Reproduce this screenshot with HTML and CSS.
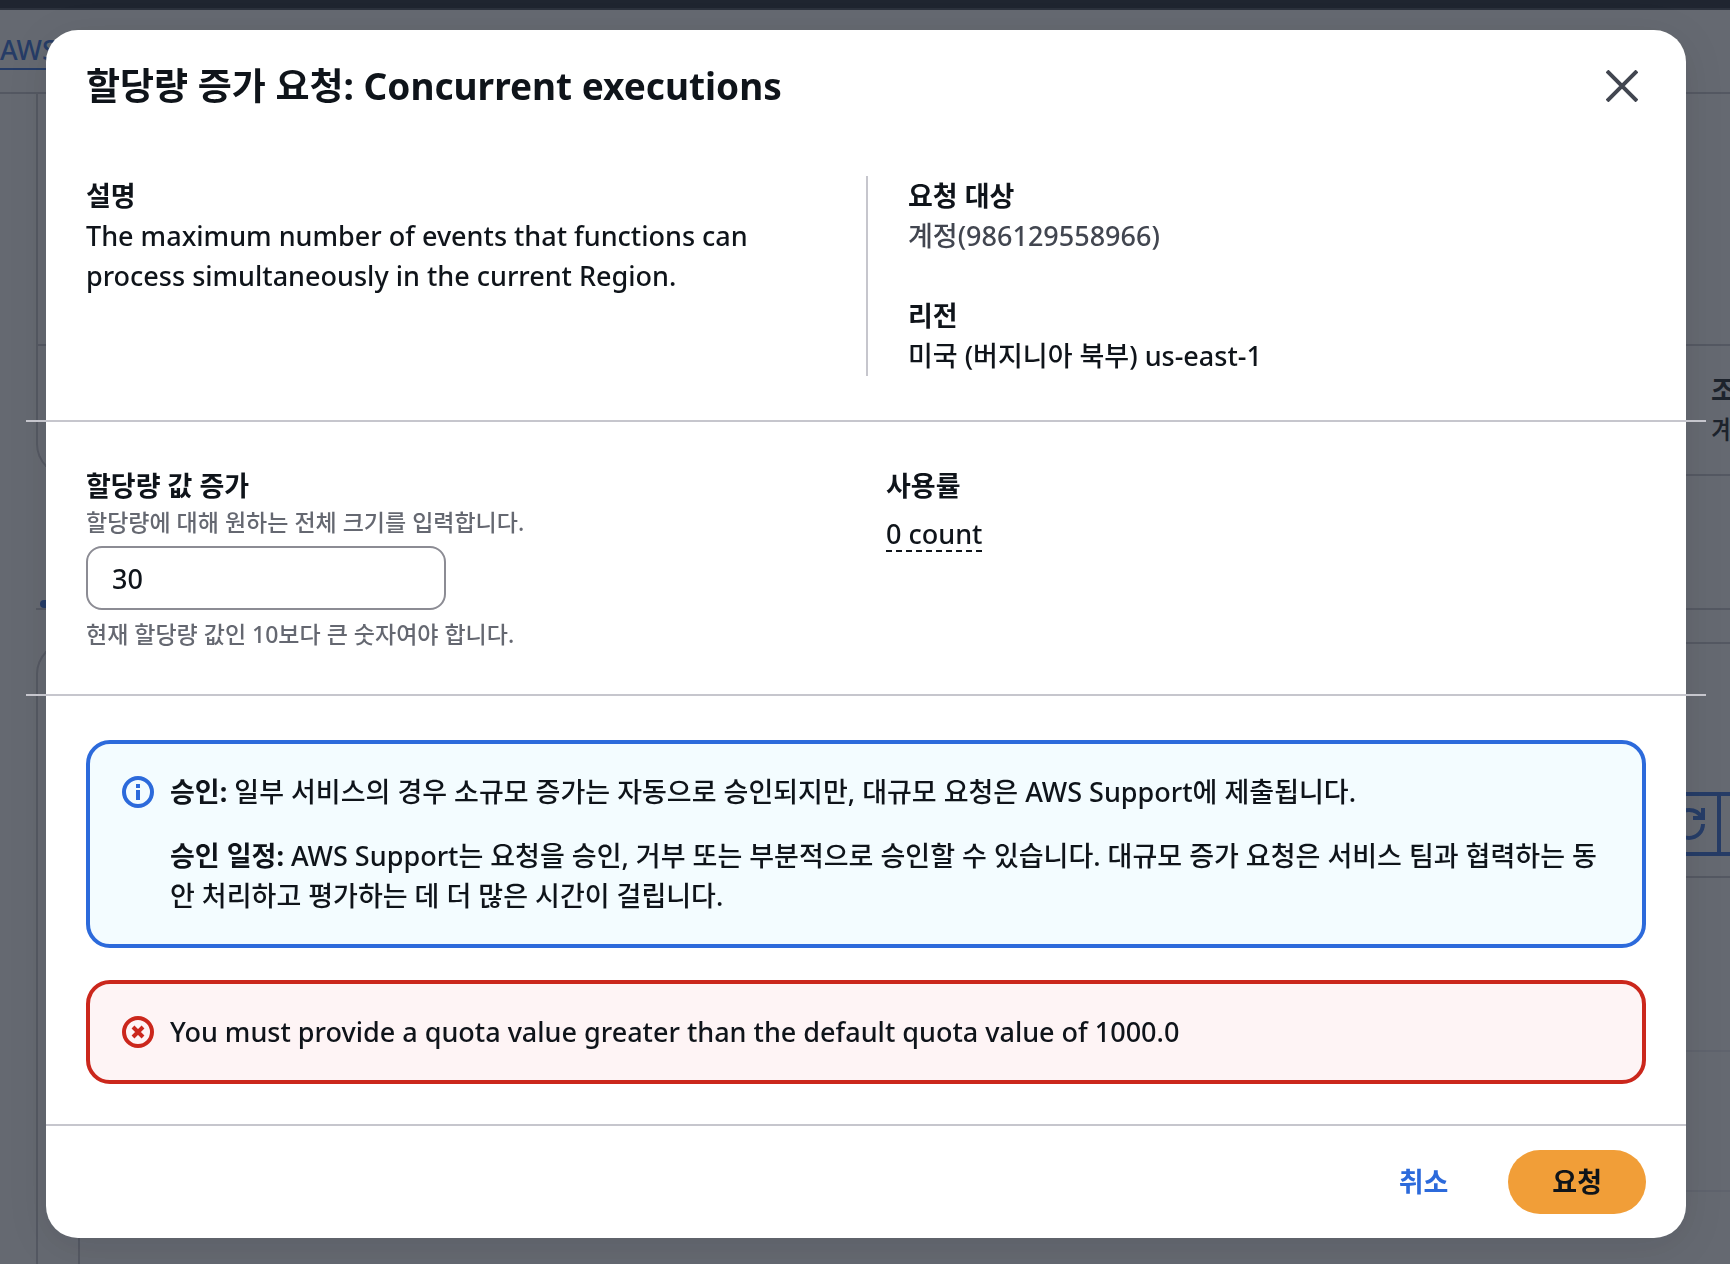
FILE: index.html
```html
<!DOCTYPE html>
<html lang="ko">
<head>
    <meta charset="UTF-8">
    <meta name="viewport" content="width=device-width, initial-scale=1">
    <title>할당량 증가 요청</title>
    <link rel="stylesheet" href="styles.css">
</head>
<body>

<!-- page behind the dialog -->
<div class="page" inert>
    <div class="topbar"></div>
    <div class="breadcrumb"><a href="#">AWS</a></div>
    <div class="content">
        <div class="panel panel-summary">
            <div class="panel-head"></div>
            <div class="panel-row">
                <div class="cell"><b>조</b><br>계</div>
            </div>
        </div>
        <div class="tabs"><span class="tab-mark"></span></div>
        <div class="panel panel-table">
            <div class="tools">
                <button class="tool" type="button" aria-label="새로 고침">
                    <svg width="32" height="32" viewBox="0 0 16 16" fill="none" stroke="currentColor" stroke-width="2">
                        <path d="M15 0v5h-5"/>
                        <path d="M15 8c0 3.900-3.100 7-7 7s-7-3.100-7-7 3.100-7 7-7c2.800 0 5.300 1.600 6.400 4"/>
                    </svg>
                </button>
                <button class="tool tool-last" type="button" aria-label="더 보기"></button>
            </div>
            <div class="table-row"></div>
            <div class="table-row table-row-short"></div>
            <div class="table-end"></div>
        </div>
    </div>
</div>

<div class="overlay">
    <div class="modal" role="dialog" aria-modal="true" aria-labelledby="modal-title">
        <div class="modal-header">
            <h1 id="modal-title">할당량 증가 요청: Concurrent executions</h1>
            <button class="close" type="button" aria-label="닫기">
                <svg width="32" height="32" viewBox="0 0 32 32" fill="none" stroke="currentColor" stroke-width="4">
                    <path d="M1 1l30 30M31 1l-30 30"/>
                </svg>
            </button>
        </div>

        <div class="modal-body">
            <div class="details">
                <div class="detail">
                    <h2>설명</h2>
                    <p>The maximum number of events that functions can process simultaneously in the current Region.</p>
                </div>
                <div class="detail detail-right">
                    <div>
                        <h2>요청 대상</h2>
                        <p class="muted">계정(986129558966)</p>
                    </div>
                    <div>
                        <h2>리전</h2>
                        <p>미국 (버지니아 북부) us-east-1</p>
                    </div>
                </div>
            </div>

            <hr>

            <div class="form">
                <div class="field">
                    <label for="quota">할당량 값 증가</label>
                    <p class="hint" id="quota-hint">할당량에 대해 원하는 전체 크기를 입력합니다.</p>
                    <input id="quota" type="text" value="30" aria-describedby="quota-hint quota-limit">
                    <p class="hint" id="quota-limit">현재 할당량 값인 10보다 큰 숫자여야 합니다.</p>
                </div>
                <div class="usage">
                    <h2>사용률</h2>
                    <button class="count" type="button">0 count</button>
                </div>
            </div>

            <hr>

            <div class="alerts">
                <div class="alert info">
                    <svg class="alert-icon" width="32" height="32" viewBox="0 0 32 32">
                        <circle cx="16" cy="16" r="14" fill="none" stroke="currentColor" stroke-width="4"/>
                        <path d="M14 8h4v4h-4zM14 14h4v10h-4z" fill="currentColor"/>
                    </svg>
                    <div>
                        <p><b>승인:</b> 일부 서비스의 경우 소규모 증가는 자동으로 승인되지만, 대규모 요청은 AWS Support에 제출됩니다.</p>
                        <p><b>승인 일정:</b> AWS Support는 요청을 승인, 거부 또는 부분적으로 승인할 수 있습니다. 대규모 증가 요청은 서비스 팀과 협력하는 동안 처리하고 평가하는 데 더 많은 시간이 걸립니다.</p>
                    </div>
                </div>
                <div class="alert error" role="alert">
                    <svg class="alert-icon" width="32" height="32" viewBox="0 0 32 32" fill="none" stroke="currentColor" stroke-width="4">
                        <circle cx="16" cy="16" r="14"/>
                        <path d="M11 11l10 10M21 11l-10 10"/>
                    </svg>
                    <p>You must provide a quota value greater than the default quota value of 1000.0</p>
                </div>
            </div>
        </div>

        <div class="modal-footer">
            <button class="btn" type="button">취소</button>
            <button class="btn primary" type="button">요청</button>
        </div>
    </div>
</div>

</body>
</html>
```
FILE: styles.css
```css
* {
    box-sizing: border-box;
}
body {
    margin: 0;
    overflow: hidden;
    font-family: "Noto Sans", "Noto Sans CJK KR", sans-serif;
    font-size: 27px;
    font-weight: 500;
    line-height: 40px;
    color: #0f141a;
}
h1, h2, p {
    margin: 0;
}
h2, label {
    font-size: 27px;
    line-height: 40px;
    font-weight: bold;
}
button, input {
    font: inherit;
    color: inherit;
}
button {
    background: none;
    border: none;
    padding: 0;
    cursor: pointer;
}
svg {
    display: block;
}

/* page behind the dialog */
.page {
    display: flex;
    flex-direction: column;
    height: 100vh;
    overflow: hidden;
}
.topbar {
    height: 10px;
    flex: none;
    background: #161d26;
    border-bottom: 2px solid #424650;
}
.breadcrumb {
    flex: none;
    height: 84px;
    padding-top: 20px;
    border-bottom: 2px solid #c6c6cd;
}
.breadcrumb a {
    display: inline-block;
    color: #2c6adb;
    line-height: 36px;
    text-decoration: none;
    border-bottom: 2px solid #2c6adb;
}
.content {
    flex: 1;
    display: flex;
    flex-direction: column;
    padding-left: 36px;
}
.panel {
    border-left: 2px solid #c6c6cd;
}
.panel-summary {
    border-bottom: 2px solid #c6c6cd;
    border-bottom-left-radius: 32px;
}
.panel-head {
    height: 252px;
    border-bottom: 2px solid #c6c6cd;
}
.panel-row {
    display: flex;
    justify-content: flex-end;
    height: 128px;
    padding-top: 24px;
}
.cell {
    width: 19px;
    overflow: hidden;
    white-space: nowrap;
}
.tabs {
    display: flex;
    align-items: flex-end;
    height: 134px;
    padding-left: 4px;
    border-bottom: 2px solid #c6c6cd;
}
.tab-mark {
    width: 160px;
    height: 8px;
    border-radius: 4px;
    background: #2c6adb;
}
.panel-table {
    flex: 1;
    margin-top: 32px;
    border-top: 2px solid #c6c6cd;
    border-top-left-radius: 32px;
}
.tools {
    display: flex;
    justify-content: flex-end;
    height: 234px;
    margin-left: 40px;
    padding-top: 148px;
    border-bottom: 2px solid #c6c6cd;
}
.tool {
    height: 64px;
    padding: 12px;
    color: #2c6adb;
    border: 4px solid currentColor;
}
.tool-last {
    width: 9px;
    padding: 0;
    border-left: none;
    border-right: none;
}
.table-row {
    height: 174px;
    margin-left: 40px;
    border-bottom: 2px solid #ebebf0;
}
.table-row-short {
    height: 140px;
}
.table-end {
    height: 80px;
    margin-left: 40px;
    border-left: 2px solid #c6c6cd;
}

/* dialog */
.overlay {
    position: fixed;
    inset: 0;
    padding: 30px 44px 26px 46px;
    background: rgba(35, 41, 53, 0.7);
}
.modal {
    background: #fff;
    border-radius: 32px;
    box-shadow: 0 8px 40px rgba(0, 7, 22, 0.1);
}
.modal-header {
    display: flex;
    align-items: center;
    justify-content: space-between;
    padding: 32px 40px 16px;
}
h1 {
    font-size: 37px;
    line-height: 48px;
    font-weight: bold;
}
.close {
    display: flex;
    align-items: center;
    justify-content: center;
    width: 48px;
    height: 48px;
    color: #424650;
}
.modal-body {
    padding: 50px 40px 40px;
}
.details {
    display: grid;
    grid-template-columns: 1fr 1fr;
}
.detail {
    padding-right: 40px;
}
.detail-right {
    display: flex;
    flex-direction: column;
    gap: 40px;
    padding-left: 40px;
    border-left: 2px solid #c6c6cd;
}
.muted {
    color: #424650;
}
/* runs past both edges of the dialog */
hr {
    height: 2px;
    margin: 44px -60px;
    border: none;
    background: #c6c6cd;
}
.form {
    display: grid;
    grid-template-columns: 1fr 1fr;
    gap: 40px;
}
.field {
    display: flex;
    flex-direction: column;
}
.hint {
    font-size: 23px;
    line-height: 32px;
    color: #656871;
}
.field input {
    width: 360px;
    height: 64px;
    margin: 8px 0;
    padding: 0 24px;
    border: 2px solid #8c8c94;
    border-radius: 16px;
    background: #fff;
}
.count {
    margin-top: 12px;
    line-height: 32px;
    border-bottom: 2px dashed #0f141a;
}
.alerts {
    display: flex;
    flex-direction: column;
    gap: 32px;
}
.alert {
    display: flex;
    gap: 16px;
    padding: 28px 32px;
    border: 4px solid;
    border-radius: 24px;
}
.alert p {
    color: #0f141a;
}
.alert p + p {
    margin-top: 24px;
}
.alert-icon {
    flex: none;
    margin-top: 4px;
}
.info {
    color: #2c6adb;
    background: #f3fcff;
}
.error {
    color: #cb271c;
    background: #fef4f5;
}
.modal-footer {
    display: flex;
    justify-content: flex-end;
    gap: 16px;
    padding: 24px 40px;
    border-top: 2px solid #c6c6cd;
}
.btn {
    height: 64px;
    padding: 0 44px;
    border-radius: 32px;
    font-weight: bold;
    color: #2c6adb;
}
.primary {
    background: #f19e38;
    color: #0f141a;
}
```
